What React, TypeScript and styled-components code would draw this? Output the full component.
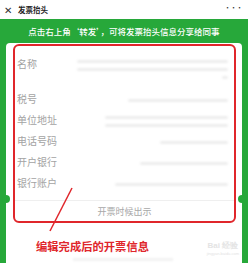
import React from 'react';
import styled, {createGlobalStyle} from 'styled-components';

const GREEN = '#27a83a';
const RED = '#e0262b';

const Global = createGlobalStyle`
    html, body {
        margin: 0;
        padding: 0;
        background: #fff;
    }
    body {
        width: 248px;
        height: 263px;
        overflow: hidden;
        font-family: "Noto Sans CJK SC", "Noto Sans", sans-serif;
    }
`;

const Page = styled.div`
    display: flex;
    flex-direction: column;
    width: 248px;
    height: 263px;
`;

const TopBar = styled.div`
    height: 19px;
    display: flex;
    align-items: center;
    padding: 0 6px 0 4px;
    background: #fff;
    color: #222;
`;

const Close = styled.span`
    font-size: 10px;
    line-height: 1;
    margin-right: 6px;
    color: #333;
`;

const Title = styled.span`
    font-size: 7.5px;
    font-weight: 700;
    flex: 1;
`;

const More = styled.span`
    font-size: 7px;
    letter-spacing: -1px;
    color: #333;
    margin-top: -5px;
`;

const GreenArea = styled.div`
    flex: 1;
    background: ${GREEN};
    display: flex;
    flex-direction: column;
    padding: 0 6px;
`;

const Banner = styled.div`
    height: 24px;
    display: flex;
    align-items: center;
    justify-content: center;
    color: #fff;
    font-size: 8.5px;
    font-weight: 500;
    white-space: nowrap;
`;

const Card = styled.div`
    flex: 1;
    position: relative;
    background: #fff;
    border-radius: 4px 4px 0 0;
    padding: 1px 6px 0 7px;
    display: flex;
    flex-direction: column;
`;

const Notch = styled.div<{side: 'left' | 'right'}>`
    position: absolute;
    top: 152px;
    ${(p) => p.side}: -4px;
    width: 8px;
    height: 8px;
    border-radius: 50%;
    background: ${GREEN};
`;

const RedBox = styled.div`
    border: 2px solid ${RED};
    border-radius: 6px;
    display: flex;
    flex-direction: column;
`;

const Row = styled.div<{tall?: boolean}>`
    display: grid;
    grid-template-columns: 56px 1fr;
    align-items: ${(p) => (p.tall ? 'start' : 'center')};
    height: ${(p) => (p.tall ? 42 : 21)}px;
    padding: ${(p) => (p.tall ? '11px' : '0')} 6px 0 2px;
    box-sizing: border-box;
`;

const Label = styled.span`
    font-size: 10px;
    line-height: 14px;
    color: #a3a3a3;
    white-space: nowrap;
`;

const Values = styled.div`
    display: flex;
    flex-direction: column;
    align-items: flex-end;
    gap: 5px;
    padding-top: 3px;
`;

const Smudge = styled.div<{w: number}>`
    width: ${(p) => p.w}px;
    height: 3px;
    border-radius: 2px;
    background: #ededed;
    filter: blur(0.8px);
`;

const Divider = styled.div`
    margin-top: 7px;
    height: 1px;
    background: #efefef;
`;

const Footer = styled.div`
    height: 20px;
    display: flex;
    align-items: center;
    justify-content: center;
    font-size: 9px;
    color: #a8a8a8;
`;

const Caption = styled.div`
    margin-top: 15px;
    padding-left: 23px;
    font-size: 11.3px;
    font-weight: 700;
    color: ${RED};
    line-height: 16px;
`;

const FaintLine = styled.div`
    margin: 4px 0 0 60px;
    width: 100px;
    height: 3px;
    background: #f2f2f2;
    filter: blur(0.8px);
`;

const Arrow = styled.svg`
    position: absolute;
    left: 0;
    top: 0;
    width: 100%;
    height: 100%;
    pointer-events: none;
`;

const Watermark = styled.div`
    position: absolute;
    right: 3px;
    bottom: 7px;
    display: flex;
    flex-direction: column;
    align-items: center;
    color: #e4e4e4;
    font-family: "Liberation Sans", sans-serif;
`;

const MarkTop = styled.span`
    font-size: 8px;
    font-weight: 700;
`;

const MarkSub = styled.span`
    font-size: 4px;
`;

const rows = [
    {label: '税号', bars: [100]},
    {label: '单位地址', bars: [123, 123]},
    {label: '电话号码', bars: [68]},
    {label: '开户银行', bars: [88]},
    {label: '银行账户', bars: [113]},
];

export default function App() {
    return (
        <Page>
            <Global/>
            <TopBar>
                <Close>✕</Close>
                <Title>发票抬头</Title>
                <More>•••</More>
            </TopBar>
            <GreenArea>
                <Banner>点击右上角‘转发’，可将发票抬头信息分享给同事</Banner>
                <Card>
                    <Notch side='left'/>
                    <Notch side='right'/>
                    <RedBox>
                        <Row tall={true}>
                            <Label>名称</Label>
                            <Values>
                                <Smudge w={151}/>
                                <Smudge w={151}/>
                                <Smudge w={6}/>
                            </Values>
                        </Row>
                        {rows.map((r) => (
                            <Row key={r.label}>
                                <Label>{r.label}</Label>
                                <Values>
                                    {r.bars.map((w, i) => (
                                        <Smudge
                                            key={i}
                                            w={w}
                                        />
                                    ))}
                                </Values>
                            </Row>
                        ))}
                        <Divider/>
                        <Footer>开票时候出示</Footer>
                    </RedBox>
                    <Caption>编辑完成后的开票信息</Caption>
                    <FaintLine/>
                    <Watermark>
                        <MarkTop>Bai 经验</MarkTop>
                        <MarkSub>jingyan.baidu.com</MarkSub>
                    </Watermark>
                    <Arrow viewBox='0 0 236 220'>
                        <line
                            x1='66'
                            y1='145'
                            x2='44'
                            y2='188'
                            stroke={RED}
                            strokeWidth='1.5'
                        />
                    </Arrow>
                </Card>
            </GreenArea>
        </Page>
    );
}
